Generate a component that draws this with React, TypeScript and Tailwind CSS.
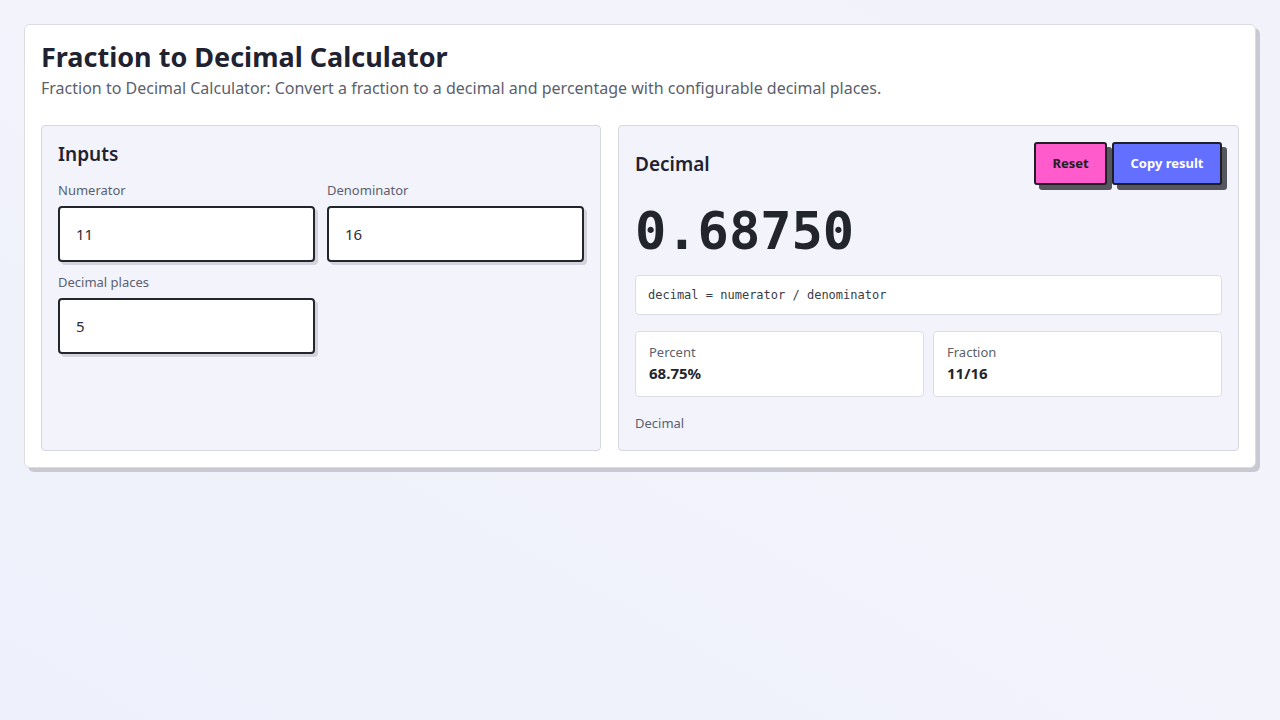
import { useState } from 'react';

const font = { fontFamily: '"Noto Sans", "Open Sans", sans-serif' };
const mono = { fontFamily: '"DejaVu Sans Mono", "Liberation Mono", monospace' };

function Field({ label, value, onChange }: { label: string; value: string; onChange: (v: string) => void }) {
  return (
    <label className="flex flex-col">
      <span className="text-[13px] text-[#5b5f6e] mb-[7px] leading-[18px]">{label}</span>
      <input
        value={value}
        onChange={(e) => onChange(e.target.value)}
        className="h-[56px] w-full bg-white border-2 border-[#23252d] rounded-[4px] px-4 text-[15px] text-[#2c2e38] shadow-[3px_3px_0_#d2d3dc] outline-none"
      />
    </label>
  );
}

export default function App() {
  const [num, setNum] = useState('11');
  const [den, setDen] = useState('16');
  const [places, setPlaces] = useState('5');

  const n = parseFloat(num);
  const d = parseFloat(den);
  const p = Math.max(0, Math.min(20, parseInt(places) || 0));
  const dec = n / d;
  const decimal = isFinite(dec) ? dec.toFixed(p) : '—';
  const percent = isFinite(dec) ? `${parseFloat((dec * 100).toFixed(4))}%` : '—';

  return (
    <div className="min-h-screen bg-gradient-to-tr from-[#eef1fb] via-[#f2f3fb] to-[#f1f2fa] px-6 pt-6 pb-10" style={font}>
      <div className="bg-white border border-[#dcdde4] rounded-[6px] shadow-[4px_4px_0_#c9cad1] px-4 pt-4 pb-4">
        <h1 className="text-[27px] font-bold text-[#1f2230] leading-[32px]">Fraction to Decimal Calculator</h1>
        <p className="text-[16px] text-[#5b5f6e] mt-[4px] leading-[22px]">
          Fraction to Decimal Calculator: Convert a fraction to a decimal and percentage with configurable decimal places.
        </p>

        <div className="grid grid-cols-[560px_1fr] gap-[17px] mt-[26px]">
          <section className="bg-[#f3f4fb] border border-[#d6d8e0] rounded-[4px] px-4 pt-[15px] pb-4 min-h-[326px]">
            <h2 className="text-[19px] font-semibold text-[#1f2230] leading-[26px] mb-[14px]">Inputs</h2>
            <div className="grid grid-cols-2 gap-x-3 gap-y-[11px]">
              <Field label="Numerator" value={num} onChange={setNum} />
              <Field label="Denominator" value={den} onChange={setDen} />
              <Field label="Decimal places" value={places} onChange={setPlaces} />
            </div>
          </section>

          <section className="bg-[#f3f4fb] border border-[#d6d8e0] rounded-[4px] px-4 pt-4 pb-4">
            <div className="flex items-start justify-between">
              <h2 className="text-[19px] font-semibold text-[#1f2230] leading-[26px] mt-[9px]">Decimal</h2>
              <div className="flex gap-[5px]">
                <button
                  onClick={() => { setNum('11'); setDen('16'); setPlaces('5'); }}
                  className="h-[43px] w-[73px] bg-[#ff5bcd] border-2 border-[#1d1e26] rounded-[3px] text-[13px] font-bold text-[#1d1e26] shadow-[5px_5px_0_#55565e]"
                >
                  Reset
                </button>
                <button
                  onClick={() => navigator.clipboard?.writeText(decimal)}
                  className="h-[43px] w-[110px] bg-[#6370ff] border-2 border-[#1d1e26] rounded-[3px] text-[13px] font-bold text-white shadow-[5px_5px_0_#55565e]"
                >
                  Copy result
                </button>
              </div>
            </div>

            <div className="text-[52px] font-bold text-[#23252d] leading-[60px] mt-[16px]" style={mono}>
              {decimal}
            </div>

            <div
              className="mt-[14px] bg-white border border-[#dcdde4] rounded-[4px] h-[40px] flex items-center px-[12px] text-[12px] text-[#3a3c46]"
              style={mono}
            >
              decimal = numerator / denominator
            </div>

            <div className="grid grid-cols-2 gap-[9px] mt-[16px]">
              <div className="bg-white border border-[#dcdde4] rounded-[4px] h-[66px] px-[13px] pt-[11px]">
                <div className="text-[13px] text-[#5b5f6e] leading-[18px]">Percent</div>
                <div className="text-[15px] font-bold text-[#23252d] leading-[22px] mt-[1px]">{percent}</div>
              </div>
              <div className="bg-white border border-[#dcdde4] rounded-[4px] h-[66px] px-[13px] pt-[11px]">
                <div className="text-[13px] text-[#5b5f6e] leading-[18px]">Fraction</div>
                <div className="text-[15px] font-bold text-[#23252d] leading-[22px] mt-[1px]">{num}/{den}</div>
              </div>
            </div>

            <div className="text-[13px] text-[#5b5f6e] mt-[17px] leading-[18px]">Decimal</div>
          </section>
        </div>
      </div>
    </div>
  );
}
